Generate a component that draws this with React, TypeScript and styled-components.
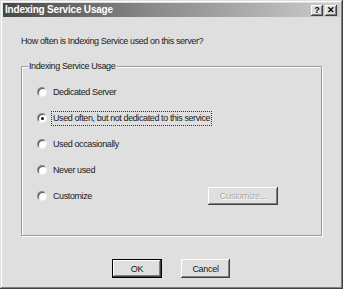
import React from "react";
import styled, { createGlobalStyle } from "styled-components";

const Global = createGlobalStyle`
  html, body { margin: 0; padding: 0; background: #dfdfdf; }
  body { font-family: "Liberation Sans", Arial, sans-serif; }
`;

const Window = styled.div`
  box-sizing: border-box;
  width: 343px;
  height: 289px;
  padding: 3px;
  background: #dfdfdf;
  display: flex;
  flex-direction: column;
  box-shadow: inset -1px -1px 0 #404040, inset 1px 1px 0 #dfdfdf,
    inset -2px -2px 0 #808080, inset 2px 2px 0 #ffffff;
`;

const TitleBar = styled.div`
  height: 14px;
  display: flex;
  align-items: center;
  justify-content: space-between;
  padding: 0 3px 0 2px;
  background: linear-gradient(to right, #484848 0%, #8a8a8a 45%, #cdcdcd 100%);
`;

const TitleText = styled.span`
  color: #ffffff;
  font-weight: bold;
  font-size: 10px;
  letter-spacing: -0.2px;
  line-height: 14px;
`;

const TitleButtons = styled.div`
  display: flex;
  gap: 2px;
`;

const TitleButton = styled.div`
  box-sizing: border-box;
  width: 12px;
  height: 11px;
  background: #dfdfdf;
  box-shadow: inset -1px -1px 0 #404040, inset 1px 1px 0 #ffffff,
    inset -2px -2px 0 #808080;
  display: flex;
  align-items: center;
  justify-content: center;
  font-size: 9px;
  font-weight: bold;
  color: #000;
  line-height: 1;
`;

const Body = styled.div`
  flex: 1;
  display: flex;
  flex-direction: column;
  padding: 19px 18px 0 18px;
  font-size: 9px;
  letter-spacing: -0.4px;
  color: #1a1a1a;
`;

const Question = styled.div`
  line-height: 11px;
  height: 11px;
`;

const GroupBox = styled.div`
  position: relative;
  box-sizing: border-box;
  margin-top: 19px;
  width: 301px;
  height: 170px;
  border: 1px solid #9a9a9a;
  box-shadow: inset 1px 1px 0 #ffffff, 1px 1px 0 #ffffff;
  padding: 12px 0 0 15px;
  display: flex;
  flex-direction: column;
`;

const Legend = styled.span`
  position: absolute;
  top: -6px;
  left: 6px;
  padding: 0 2px 0 1px;
  background: #dfdfdf;
  line-height: 11px;
`;

const Row = styled.div`
  height: 26px;
  display: flex;
  align-items: center;
`;

const Radio = styled.span<{ $checked?: boolean }>`
  box-sizing: border-box;
  width: 10px;
  height: 10px;
  border-radius: 50%;
  background: #ffffff;
  border: 1px solid;
  border-color: #8a8a8a #f0f0f0 #f0f0f0 #8a8a8a;
  box-shadow: inset 1px 1px 0 #505050;
  flex: none;
  display: flex;
  align-items: center;
  justify-content: center;
  &::after {
    content: "";
    display: ${(p) => (p.$checked ? "block" : "none")};
    width: 3px;
    height: 3px;
    border-radius: 50%;
    background: #111;
  }
`;

const Label = styled.span<{ $focus?: boolean; $width?: number }>`
  margin-left: 5px;
  padding: 1px 1px;
  line-height: 11px;
  outline: ${(p) => (p.$focus ? "1px dotted #333" : "none")};
  width: ${(p) => (p.$width ? `${p.$width}px` : "auto")};
`;

const PushButton = styled.button<{ $default?: boolean; $w: number; $h?: number }>`
  box-sizing: border-box;
  width: ${(p) => p.$w}px;
  height: ${(p) => p.$h ?? 19}px;
  padding: 0;
  margin: 0;
  border: none;
  background: #dfdfdf;
  font-family: "Liberation Sans", Arial, sans-serif;
  font-size: 9px;
  letter-spacing: -0.3px;
  color: #1a1a1a;
  box-shadow: ${(p) =>
    p.$default
      ? "inset 0 0 0 1px #000, inset -2px -2px 0 #404040, inset 2px 2px 0 #ffffff, inset -3px -3px 0 #808080"
      : "inset -1px -1px 0 #404040, inset 1px 1px 0 #ffffff, inset -2px -2px 0 #808080"};
  &:disabled {
    color: #a8a8a8;
    text-shadow: 1px 1px 0 #ffffff;
  }
`;

const ButtonRow = styled.div`
  margin-top: 23px;
  display: flex;
  justify-content: center;
  gap: 19px;
  padding-right: 1px;
`;

const options = [
  "Dedicated Server",
  "Used often, but not dedicated to this service",
  "Used occasionally",
  "Never used",
];

export default function App() {
  return (
    <>
      <Global />
      <Window>
        <TitleBar>
          <TitleText>Indexing Service Usage</TitleText>
          <TitleButtons>
            <TitleButton>?</TitleButton>
            <TitleButton>✕</TitleButton>
          </TitleButtons>
        </TitleBar>
        <Body>
          <Question>How often is Indexing Service used on this server?</Question>
          <GroupBox>
            <Legend>Indexing Service Usage</Legend>
            {options.map((o, i) => (
              <Row key={o}>
                <Radio $checked={i === 1} />
                <Label $focus={i === 1}>{o}</Label>
              </Row>
            ))}
            <Row>
              <Radio />
              <Label $width={154}>Customize</Label>
              <PushButton $w={70} $h={18} disabled>
                Customize...
              </PushButton>
            </Row>
          </GroupBox>
          <ButtonRow>
            <PushButton $w={50} $default>
              OK
            </PushButton>
            <PushButton $w={49}>Cancel</PushButton>
          </ButtonRow>
        </Body>
      </Window>
    </>
  );
}
